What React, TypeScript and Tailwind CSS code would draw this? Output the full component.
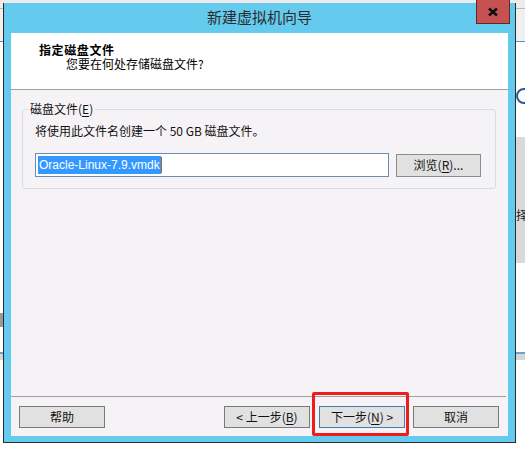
import React from "react";

const Btn = ({
  children,
  primary = false,
  className = "",
}: {
  children: React.ReactNode;
  primary?: boolean;
  className?: string;
}) => (
  <div
    className={`flex h-[22px] w-[86px] items-center justify-center border bg-[#e1e1e1] text-[12px] leading-none text-[#111] ${
      primary ? "border-[#3c7fb1]" : "border-[#7a7a7a]"
    } ${className}`}
  >
    {children}
  </div>
);

const Key = ({ k }: { k: string }) => (
  <span className="underline underline-offset-[2px]">{k}</span>
);

export default function App() {
  return (
    <div className="relative h-[449px] w-[525px] overflow-hidden bg-white font-['Noto_Sans_CJK_SC',sans-serif]">
      {/* desktop behind the dialog */}
      <div className="absolute left-0 top-0 h-[9px] w-[525px] border-b border-[#b9b9b9] bg-[#ececec]" />
      <div className="absolute left-0 top-[9px] h-[33px] w-[525px] border-b border-[#5b8fc0] bg-[#f0f0f0]" />
      <div className="absolute left-[516px] top-[88px] h-[16px] w-[16px] rounded-full border-2 border-[#2a5c9c]" />
      <div className="absolute left-[516px] top-[137px] flex h-[126px] w-[9px] items-center bg-[#d9d9d9] pt-[30px] text-[12px] text-[#222]">
        择
      </div>
      <div className="absolute left-0 top-[313px] h-[14px] w-[3px] bg-[#9a9a9a]" />
      <div className="absolute left-0 top-[352px] h-[2px] w-[525px] bg-[#6aa2cf]" />
      <div className="absolute left-0 top-[354px] h-[6px] w-[525px] bg-[#d6d6d6]" />

      {/* dialog window */}
      <div className="absolute left-[3px] top-[3px] flex h-[440px] w-[513px] flex-col border-x border-b border-[#2b2b2b] bg-[#64cbef]">
        {/* title bar */}
        <div className="flex h-[30px] items-center justify-center pb-[1px] text-[15px] text-[#2b2b2b]">
          新建虚拟机向导
        </div>

        {/* client area */}
        <div className="relative mx-[7px] flex h-[403px] flex-col bg-[#f6f3f6]">
          <div className="h-[57px] border-b border-[#a0a0a0] bg-white pl-[28px] pt-[10px] text-[12px] leading-[14px] text-black">
            <div className="font-bold tracking-[0.6px]">指定磁盘文件</div>
            <div className="pl-[27px]">您要在何处存储磁盘文件?</div>
          </div>

          <div className="flex flex-1 flex-col">
            <fieldset className="mx-[11px] mt-[12px] w-[474px] rounded-[3px] border border-[#d5dde3] px-[12px] pb-[11px]">
              <legend className="ml-[-7px] px-[2px] text-[12px] leading-[14px] text-[#111]">
                磁盘文件(<Key k="E" />)
              </legend>
              <div className="pt-[7px] text-[12px] leading-[16px] text-[#111]">
                将使用此文件名创建一个 50 GB 磁盘文件。
              </div>
              <div className="mt-[14px] flex items-center">
                <div className="flex h-[24px] w-[354px] items-center border border-[#6e8cae] bg-white pl-[2px]">
                  <span className="bg-[#3399ff] px-px font-['Liberation_Sans',sans-serif] text-[12px] leading-[18px] text-white">
                    Oracle-Linux-7.9.vmdk
                  </span>
                  <span className="h-[16px] w-px bg-[#b0602a]" />
                </div>
                <div className="ml-[7px] flex h-[23px] w-[85px] items-center justify-center border border-[#8c8c8c] bg-[#e1e1e1] text-[12px] text-[#111]">
                  浏览(<Key k="R" />)...
                </div>
              </div>
            </fieldset>

            <div className="mr-[2px] mt-auto border-t border-[#a0a0a0]" />
            <div className="flex items-center pb-[8px] pl-[8px] pr-[9px] pt-[9px]">
              <Btn>帮助</Btn>
              <Btn className="ml-auto">
                &lt; 上一步(<Key k="B" />)
              </Btn>
              <Btn primary className="ml-[9px]">
                下一步(<Key k="N" />) &gt;
              </Btn>
              <Btn className="ml-[8px]">取消</Btn>
            </div>
          </div>

          {/* red highlight around the next button */}
          <div className="absolute left-[301px] top-[359px] h-[44px] w-[97px] rounded-[2px] border-[3px] border-[#ee1c1c]" />
        </div>
      </div>

      {/* close button */}
      <div className="absolute left-[476px] top-0 flex h-[24px] w-[34px] items-center justify-center border-x border-b border-[#5a2a2a] bg-[#c75050]">
        <svg width="12" height="10" viewBox="0 0 12 10">
          <path
            d="M2 1.5 L10 8.5 M10 1.5 L2 8.5"
            stroke="#111"
            strokeWidth="2.6"
            fill="none"
          />
        </svg>
      </div>
    </div>
  );
}
